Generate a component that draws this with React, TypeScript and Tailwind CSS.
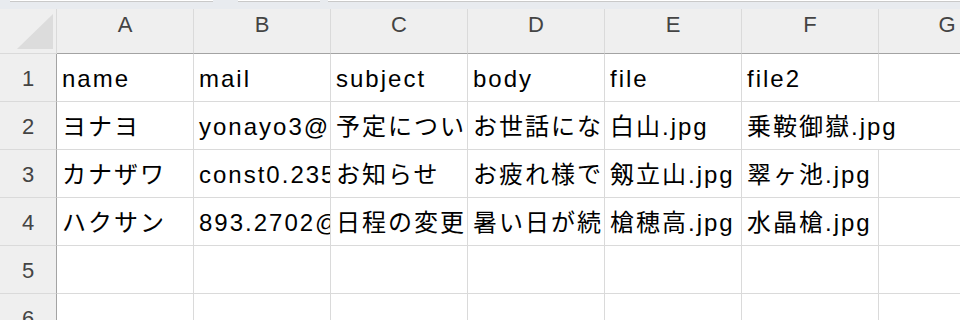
const COLS = ["A", "B", "C", "D", "E", "F", "G"];

// only what shows in the cells; the last glyph is still cut by the cell edge
const ROWS: string[][] = [
  ["name", "mail", "subject", "body", "file", "file2", ""],
  ["ヨナヨ", "yonayo3@", "予定につい", "お世話にな", "白山.jpg", "乗鞍御嶽.jpg", ""],
  ["カナザワ", "const0.235", "お知らせ", "お疲れ様で", "剱立山.jpg", "翠ヶ池.jpg", ""],
  ["ハクサン", "893.2702@", "日程の変更", "暑い日が続", "槍穂高.jpg", "水晶槍.jpg", ""],
  ["", "", "", "", "", "", ""],
  ["", "", "", "", "", "", ""],
];

// F2 spills into the empty G2, like Excel does
function spills(r: number, c: number) {
  return c < COLS.length - 1 && ROWS[r][c] !== "" && ROWS[r][c + 1] === "" && c === 5 && r === 1;
}

function Corner() {
  return (
    <div className="h-[45px] bg-[#efefef] border-r border-b border-[#dadada]">
      <svg width="56" height="44" viewBox="0 0 56 44">
        <polygon points="17,40 53,40 53,5" fill="#dcdcdc" />
      </svg>
    </div>
  );
}

export default function App() {
  return (
    <div
      className="w-[960px] h-[320px] overflow-hidden bg-white"
      style={{ fontFamily: '"Liberation Sans", "Noto Sans CJK JP", sans-serif' }}
    >
      {/* bottom of the formula bar */}
      <div className="h-[9px] bg-[#e8ebef] flex items-start">
        <div className="ml-[10px] w-[203px] h-[2px] bg-white border-b border-[#c9c9c9]" />
        <div className="ml-[25px] w-[82px] h-[2px] bg-white border-b border-[#c9c9c9]" />
        <div className="ml-[8px] flex-1 h-[2px] bg-white border-b border-[#c9c9c9]" />
      </div>

      <div className="grid grid-cols-[57px_repeat(7,137px)]">
        <Corner />
        {COLS.map((c) => (
          <div
            key={c}
            className="h-[45px] bg-[#efefef] border-r border-[#dadada] border-b-[1px] border-b-[#a3a3a3] pt-[4px] text-center text-[22px] leading-[24px] text-[#444]"
          >
            {c}
          </div>
        ))}

        {ROWS.map((row, r) => (
          <div key={r} className="contents">
            <div className="h-[48px] bg-[#efefef] border-b border-[#dadada] border-r-[1px] border-r-[#a3a3a3] pt-[13px] text-center text-[22px] leading-[24px] text-[#444]">
              {r + 1}
            </div>
            {row.map((v, c) => {
              const spill = spills(r, c);
              return (
                <div
                  key={c}
                  className={
                    spill
                      ? "relative z-10 h-[48px] border-b border-[#dadada] pl-[5px] pt-[11px] whitespace-nowrap overflow-visible text-[24px] leading-[28px] tracking-[2px] text-black"
                      : "h-[48px] border-r border-b border-[#dadada] pl-[5px] pt-[11px] whitespace-nowrap overflow-hidden text-[24px] leading-[28px] tracking-[2px] text-black"
                  }
                >
                  {v}
                </div>
              );
            })}
          </div>
        ))}
      </div>
    </div>
  );
}
